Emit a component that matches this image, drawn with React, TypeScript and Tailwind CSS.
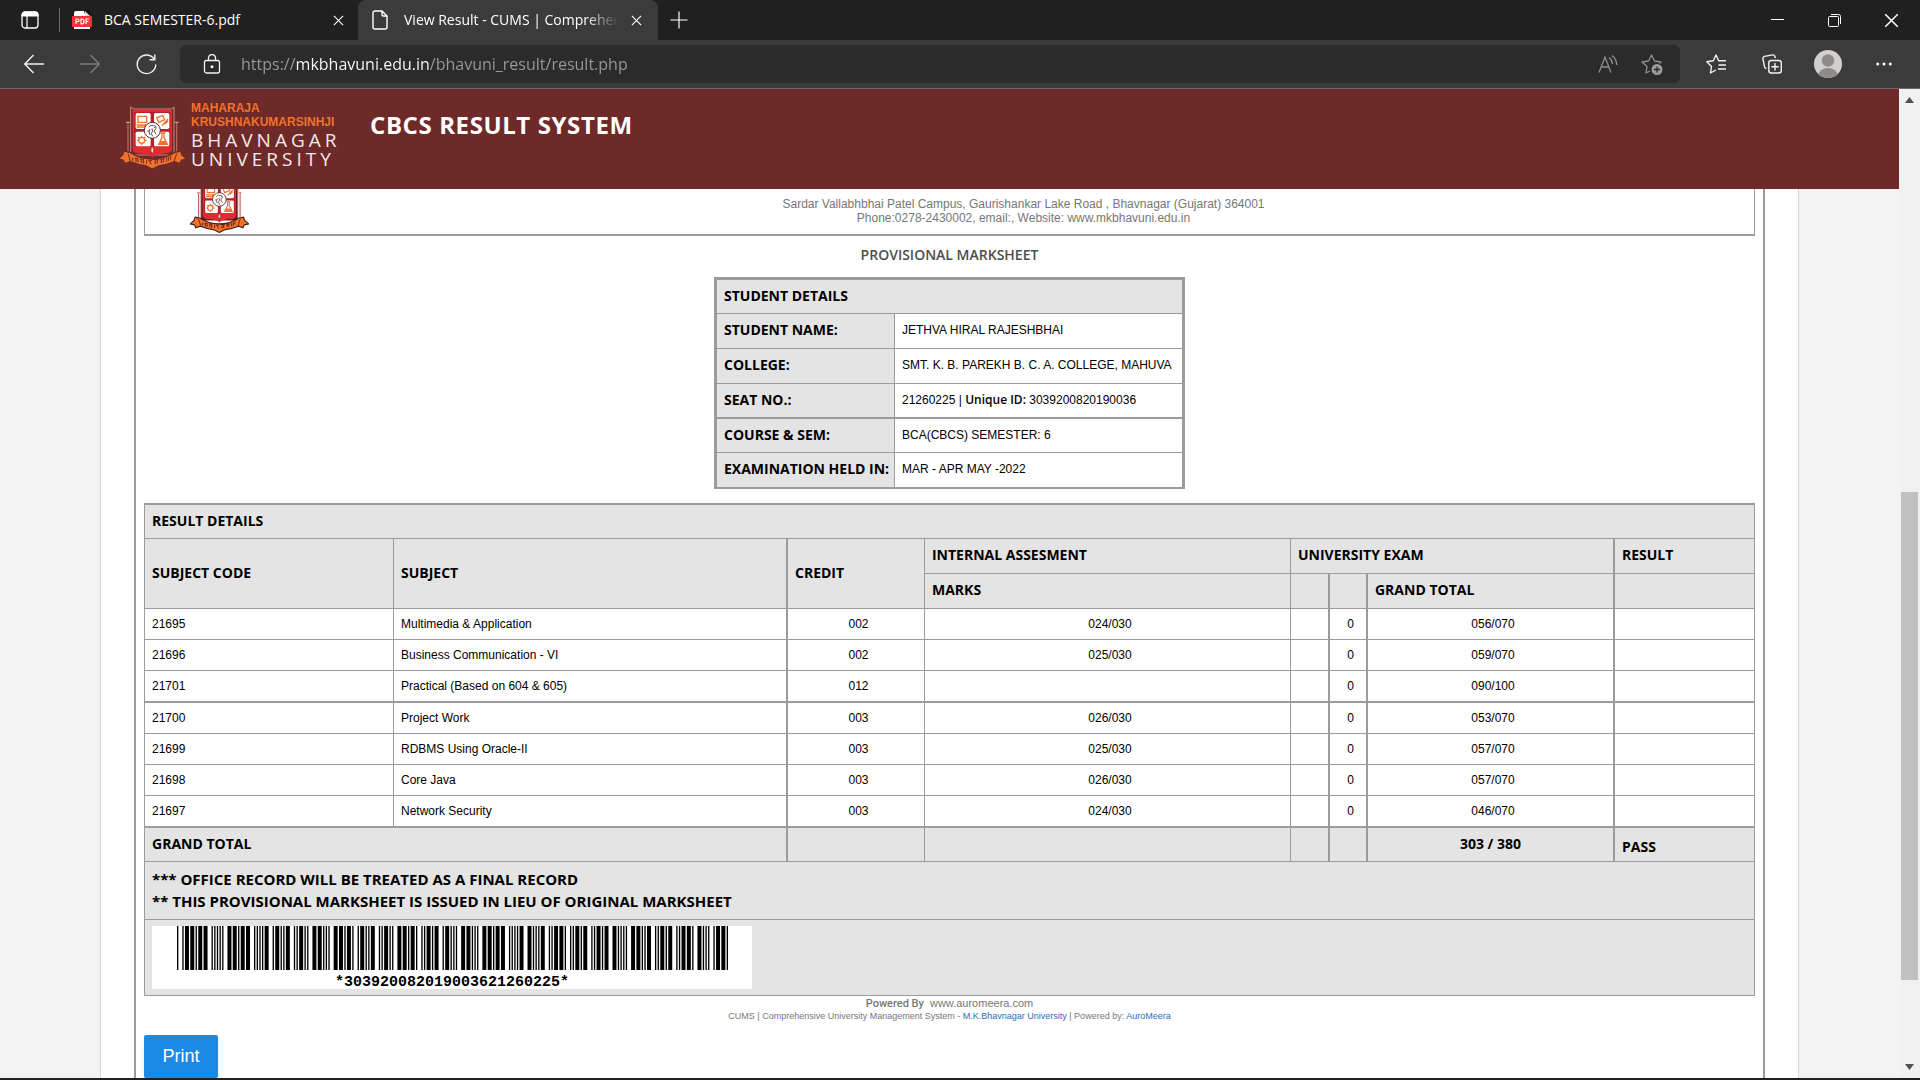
import type { ReactNode } from "react";

/* ---------- Code 39 barcode ---------- */

const CODE39: Record<string, string> = {
  "0": "nnnwwnwnn",
  "1": "wnnwnnnnw",
  "2": "nnwwnnnnw",
  "3": "wnwwnnnnn",
  "4": "nnnwwnnnw",
  "5": "wnnwwnnnn",
  "6": "nnwwwnnnn",
  "7": "nnnwnnwnw",
  "8": "wnnwnnwnn",
  "9": "nnwwnnwnn",
  "*": "nwnnwnwnn",
};

function Barcode({ value }: { value: string }) {
  const bars: { x: number; w: number }[] = [];
  let x = 0;
  for (const ch of value) {
    CODE39[ch].split("").forEach((k, i) => {
      const w = k === "w" ? 3 : 1;
      if (i % 2 === 0) bars.push({ x, w });
      x += w;
    });
    x += 1;
  }
  return (
    <div className="flex h-[63px] w-[600px] flex-col items-center bg-white">
      <svg className="h-11 w-[551px]" viewBox={`0 0 ${x - 1} 44`} preserveAspectRatio="none" aria-label="Barcode">
        {bars.map((b) => (
          <rect key={b.x} x={b.x} y="0" width={b.w} height="44" fill="#000" />
        ))}
      </svg>
      <span className="mt-1.5 font-['Liberation_Mono',monospace] text-[15px] leading-[13px] font-bold text-black">{value}</span>
    </div>
  );
}

/* ---------- University emblem ---------- */

function Emblem({ className, line }: { className: string; line: string }) {
  return (
    <svg className={className} viewBox="0 0 207 190" fill="none" aria-hidden="true">
      <path d="M30 48V136M176 48V136" stroke="#b5655a" strokeWidth="4" />
      <path d="M24 48H36M170 48H182" stroke="#d99a86" strokeWidth="4" />
      <path d="M38 2L46 8H160L168 2V146H38Z" fill={line} stroke="#c98d84" strokeWidth="3" />
      <path d="M44 11H162V128Q162 142 134 142Q108 144 103 154Q98 144 72 142Q44 142 44 128Z" fill="#e22a31" />
      <path d="M49 17H157V120H49Z" fill="#b3202a" />
      <rect x="53" y="20" width="45" height="48" rx="5" fill="#fff" />
      <rect x="108" y="20" width="46" height="48" rx="5" fill="#fff" />
      <rect x="53" y="76" width="45" height="44" rx="5" fill="#fff" />
      <rect x="108" y="76" width="46" height="44" rx="5" fill="#fff" />
      <g stroke="#f0722b" strokeWidth="4">
        <path d="M60 30H86V48H60ZM56 56H82L78 62H56" />
        <path d="M116 34L134 28L140 40L122 48ZM132 58L150 38M140 54L150 44" />
        <circle cx="71" cy="102" r="9" />
        <path d="M71 88V93M71 111V116M57 102H62M80 102H86M60 92L65 96M82 92L77 96" />
        <path d="M132 80V94L122 114H148L138 94V80M128 80H142" />
        <path d="M128 106H142L145 112H125Z" fill="#f0722b" />
      </g>
      <circle cx="103" cy="72" r="24" fill="#fff" stroke="#5f2527" strokeWidth="3" />
      <path d="M92 62Q98 54 106 58Q114 56 114 66L108 74L114 84M96 68Q90 76 96 86M102 66Q106 74 100 82L104 90M88 74H94M108 64L112 62" stroke="#6b4a4a" strokeWidth="3" />
      <path d="M103 120Q112 132 103 142Q94 132 103 120Z" fill="#fde7c0" stroke={line} strokeWidth="2" />
      <path
        d="M18 134L36 138Q66 158 103 158Q140 158 170 138L188 134L192 146L206 158L190 162L186 172L170 166Q146 176 124 178L103 188L82 178Q60 176 36 166L20 172L16 162L1 158L14 146Z"
        fill="#f0722b"
        stroke={line}
        strokeWidth="4"
      />
      <path d="M30 142L38 166M176 142L168 166" stroke={line} strokeWidth="3" />
      <path
        d="M44 154V164M50 156H60M54 156V168M60 156V168M66 158H78M70 158V170M76 158V172M86 162V172M92 162H102M94 162L100 174M108 160H122M112 160V174M118 160V172M126 158H140M130 158V170M136 158V168M146 154V166M152 152V164M158 150V160"
        stroke={line}
        strokeWidth="3"
      />
    </svg>
  );
}

/* ---------- Browser chrome ---------- */

function IconButton({ label, className, children }: { label: string; className: string; children: ReactNode }) {
  return (
    <button type="button" aria-label={label} className={`flex shrink-0 items-center justify-center ${className}`}>
      {children}
    </button>
  );
}

function CloseGlyph({ className }: { className: string }) {
  return (
    <svg className={className} viewBox="0 0 12 12" fill="none" stroke="currentColor" aria-hidden="true">
      <path d="M1 1L11 11M11 1L1 11" strokeWidth="1.2" />
    </svg>
  );
}

function TabStrip() {
  return (
    <div className="flex h-10 shrink-0 bg-[#202020] text-white">
      <IconButton label="Tab actions" className="w-[59px]">
        <svg className="h-[18px] w-[18px]" viewBox="0 0 18 18" fill="none" stroke="#fff" aria-hidden="true">
          <rect x="1" y="1" width="16" height="16" rx="3" strokeWidth="1.3" />
          <path d="M1 5V4A3 3 0 0 1 4 1H14A3 3 0 0 1 17 4V5Z" fill="#fff" />
          <path d="M6 5V17" strokeWidth="1.2" />
        </svg>
      </IconButton>
      <div className="my-2 w-px bg-[#6b6b6b]" />
      <div className="flex w-[298px] items-center pl-3">
        <svg className="h-5 w-5 shrink-0" viewBox="0 0 20 20" aria-hidden="true">
          <path d="M4 1H13L18 6V19H2V3Q2 1 4 1Z" fill="#fff" />
          <path d="M12 0H18V6Q12 6 12 0Z" fill="#111" />
          <path d="M13 1L18 6H13Z" fill="#ddd" />
          <rect x="0" y="6" width="20" height="11" rx="1" fill="#f0343c" />
          <path d="M4 14V9H5.6Q7 9 7 10.4Q7 11.6 5.6 11.6H4M9 14V9H10Q12 9 12 11.5Q12 14 10 14ZM14 14V9H17M14 11.5H16.4" fill="none" stroke="#fff" strokeWidth="1.1" />
        </svg>
        <span className="ml-3 flex-1 text-sm whitespace-nowrap">BCA SEMESTER-6.pdf</span>
        <IconButton label="Close tab" className="h-10 w-10">
          <CloseGlyph className="h-[11px] w-[11px]" />
        </IconButton>
      </div>
      <div className="flex w-[300px] items-center rounded-t-lg bg-[#3b3b3b] pl-[14px]">
        <svg className="h-5 w-4 shrink-0" viewBox="0 0 16 20" fill="none" stroke="#fff" strokeWidth="1.4" aria-hidden="true">
          <path d="M10 1H3A2 2 0 0 0 1 3V17A2 2 0 0 0 3 19H13A2 2 0 0 0 15 17V6ZM10 1V4.500A1.500 1.500 0 0 0 11.500 6H15" />
        </svg>
        <span className="ml-4 flex-1 overflow-hidden mask-r-from-85% text-sm whitespace-nowrap">
          View Result - CUMS | Comprehensive
        </span>
        <IconButton label="Close tab" className="h-10 w-9">
          <CloseGlyph className="h-[11px] w-[11px]" />
        </IconButton>
        <span className="w-1" />
      </div>
      <IconButton label="New tab" className="w-[42px]">
        <svg className="h-[18px] w-[18px]" viewBox="0 0 18 18" stroke="#fff" strokeWidth="1.2" aria-hidden="true">
          <path d="M9 0.500V17.500M0.500 9H17.500" />
        </svg>
      </IconButton>
      <div className="flex-1" />
      <IconButton label="Minimize" className="w-[57px]">
        <svg className="h-3 w-[13px]" viewBox="0 0 13 12" stroke="#fff" aria-hidden="true">
          <path d="M0 5.500H13" />
        </svg>
      </IconButton>
      <IconButton label="Restore" className="w-[57px]">
        <svg className="h-[13px] w-[13px]" viewBox="0 0 13 13" fill="none" stroke="#fff" aria-hidden="true">
          <rect x="0.500" y="2.500" width="10" height="10" rx="1" />
          <path d="M3 0.500H10.500A2 2 0 0 1 12.500 2.500V10" />
        </svg>
      </IconButton>
      <IconButton label="Close window" className="w-[57px]">
        <CloseGlyph className="h-[15px] w-[15px]" />
      </IconButton>
    </div>
  );
}

function Toolbar() {
  return (
    <div className="flex h-[49px] shrink-0 items-center border-b border-[#6a6a6a] bg-[#3b3b3b] pr-2 pl-1.5 text-white">
      <IconButton label="Back" className="h-10 w-14">
        <svg className="h-5 w-5" viewBox="0 0 20 20" fill="none" stroke="#f2f2f2" strokeWidth="1.4" aria-hidden="true">
          <path d="M20 10H1M9.500 1L0.800 10L9.500 19" />
        </svg>
      </IconButton>
      <IconButton label="Forward" className="h-10 w-14">
        <svg className="h-5 w-5" viewBox="0 0 20 20" fill="none" stroke="#7c7c7c" strokeWidth="1.4" aria-hidden="true">
          <path d="M0 10H19M10.500 1L19.200 10L10.500 19" />
        </svg>
      </IconButton>
      <IconButton label="Refresh" className="h-10 w-14">
        <svg className="h-[21px] w-[21px]" viewBox="0 0 21 21" fill="none" stroke="#f2f2f2" strokeWidth="1.4" aria-hidden="true">
          <path d="M18.500 5.500A9.300 9.300 0 1 0 19.800 10.500M18.800 0.500V5.700H13.500" />
        </svg>
      </IconButton>
      <div className="ml-1.5 flex h-[38px] flex-1 items-center rounded-md bg-[#2b2b2b] pr-1.5 pl-[23px]">
        <svg className="h-5 w-[18px] shrink-0" viewBox="0 0 18 20" fill="none" stroke="#f2f2f2" strokeWidth="1.300" aria-hidden="true">
          <rect x="1.500" y="6.500" width="15" height="12.500" rx="2" />
          <path d="M5.500 6.500V4A3.500 3.500 0 0 1 12.500 4V6.500" />
          <circle cx="9" cy="12.800" r="0.900" fill="#f2f2f2" />
        </svg>
        <input
          type="text"
          aria-label="Address"
          defaultValue="https://mkbhavuni.edu.in/bhavuni_result/result.php"
          className="ml-5 h-[30px] flex-1 bg-[linear-gradient(90deg,#9a9a9a_55px,#fff_55px,#fff_189px,#9a9a9a_189px)] bg-clip-text text-base text-transparent outline-none"
        />
        <IconButton label="Read aloud" className="h-8 w-11">
          <svg className="h-[18px] w-5" viewBox="0 0 20 18" fill="none" stroke="#8e8e8e" strokeWidth="1.300" aria-hidden="true">
            <path d="M1 17.500L7 2L13 17.500M3 12H11M11 2.500Q14 4.500 14.500 9M14 0.500Q18.500 4 18.800 10" />
          </svg>
        </IconButton>
        <IconButton label="Add to favorites" className="h-8 w-11">
          <svg className="h-[21px] w-[22px]" viewBox="0 0 22 21" fill="none" stroke="#8e8e8e" strokeWidth="1.300" aria-hidden="true">
            <path d="M9 17L5 19L6 12.500L1 8L7.500 7L10.500 1L13.500 7L20 8L18.500 9.500" strokeLinejoin="round" />
            <circle cx="16" cy="15.500" r="5.500" fill="#9a9a9a" stroke="none" />
            <path d="M16 12.500V18.500M13 15.500H19" stroke="#2b2b2b" />
          </svg>
        </IconButton>
      </div>
      <IconButton label="Favorites" className="ml-2 h-10 w-14">
        <svg className="h-5 w-5" viewBox="0 0 20 20" fill="none" stroke="#f2f2f2" strokeWidth="1.400" aria-hidden="true">
          <path d="M10 16L4.500 19L5.500 12.500L0.800 7.800L7.300 6.800L10 1L12.700 6.800H20M12.500 11H20M12 15H20" strokeLinejoin="round" />
        </svg>
      </IconButton>
      <IconButton label="Collections" className="h-10 w-14">
        <svg className="h-5 w-5" viewBox="0 0 20 20" fill="none" stroke="#f2f2f2" strokeWidth="1.400" aria-hidden="true">
          <rect x="6.800" y="6.500" width="12.500" height="12.500" rx="2.500" />
          <path d="M13 9V16.500M9.300 12.800H16.800M4.500 14.500Q3 14.500 2.600 13L0.900 5Q0.600 3 2.500 2.400L10.500 0.900Q12.500 0.800 13 2.500L13.300 4.200" />
        </svg>
      </IconButton>
      <IconButton label="Profile" className="h-10 w-14">
        <svg className="h-7 w-7" viewBox="0 0 28 28" aria-hidden="true">
          <clipPath id="avatar">
            <circle cx="14" cy="14" r="14" />
          </clipPath>
          <g clipPath="url(#avatar)">
            <rect width="28" height="28" fill="#d2d0ce" />
            <circle cx="14" cy="10.500" r="6.200" fill="#8f8b88" />
            <ellipse cx="14" cy="26" rx="10" ry="8" fill="#8f8b88" />
          </g>
        </svg>
      </IconButton>
      <IconButton label="Settings and more" className="h-10 w-14">
        <svg className="h-1 w-4" viewBox="0 0 16 4" fill="#fff" aria-hidden="true">
          <circle cx="1.700" cy="2" r="1.500" />
          <circle cx="8" cy="2" r="1.500" />
          <circle cx="14.300" cy="2" r="1.500" />
        </svg>
      </IconButton>
    </div>
  );
}

function Scrollbar() {
  return (
    <div className="flex w-[21px] shrink-0 flex-col items-center justify-between bg-[#f1f1f1] pt-2 pb-2">
      <svg className="h-[6px] w-[9px]" viewBox="0 0 9 6" fill="#505050" aria-hidden="true">
        <path d="M0 6L4.500 0L9 6Z" />
      </svg>
      <div className="flex w-full flex-1 flex-col px-0.5">
        <div className="grow-[389]" />
        <div className="grow-[488] bg-[#c1c1c1]" />
        <div className="grow-[84]" />
      </div>
      <svg className="h-[6px] w-[9px]" viewBox="0 0 9 6" fill="#505050" aria-hidden="true">
        <path d="M0 0L4.500 6L9 0Z" />
      </svg>
    </div>
  );
}

/* ---------- Page ---------- */

function SiteHeader() {
  return (
    <header className="flex h-[100px] shrink-0 bg-[#6e2929] pl-[118px]">
      <div className="mt-3 flex h-[72px] w-[252px]">
        <Emblem className="mt-[5px] h-[64px] w-[69px] shrink-0" line="#6e2929" />
        <div className="ml-1 flex flex-col">
          <span className="font-['Liberation_Sans',sans-serif] text-xs leading-[14px] font-bold text-[#f0722b]">MAHARAJA</span>
          <span className="font-['Liberation_Sans',sans-serif] text-xs leading-[14px] font-bold text-[#f0722b]">KRUSHNAKUMARSINHJI</span>
          <span className="pt-0.5 text-[19px] leading-[19px] font-medium tracking-[4px] text-[#f3e9e9]">BHAVNAGAR</span>
          <span className="text-[19px] leading-[19px] font-medium tracking-[4px] text-[#f3e9e9]">UNIVERSITY</span>
        </div>
      </div>
      <h1 className="mt-[18px] text-2xl leading-9 font-bold tracking-wide text-white">CBCS RESULT SYSTEM</h1>
    </header>
  );
}

const LABEL = "border-t border-[#9b9b9b] bg-[#e4e4e4] px-[7px] pb-0.5 text-left text-sm font-bold whitespace-nowrap";
const VALUE = "border-t border-l border-[#9b9b9b] bg-white px-[7px] pb-0.5 text-xs whitespace-nowrap";

function StudentTable() {
  return (
    <table className="mx-auto w-[471px] table-fixed border-separate border-spacing-0 border-3 border-b-2 border-[#9b9b9b] text-black">
      <colgroup>
        <col className="w-[177px]" />
        <col />
      </colgroup>
      <tbody>
        <tr className="h-[33px]">
          <th colSpan={2} scope="colgroup" className="bg-[#e4e4e4] px-[7px] pb-0.5 text-left text-sm font-bold">
            STUDENT DETAILS
          </th>
        </tr>
        <tr className="h-[35px]">
          <th scope="row" className={LABEL}>STUDENT NAME:</th>
          <td className={VALUE}>JETHVA HIRAL RAJESHBHAI</td>
        </tr>
        <tr className="h-[35px]">
          <th scope="row" className={LABEL}>COLLEGE:</th>
          <td className={VALUE}>SMT. K. B. PAREKH B. C. A. COLLEGE, MAHUVA</td>
        </tr>
        <tr className="h-[34px]">
          <th scope="row" className={LABEL}>SEAT NO.:</th>
          <td className={VALUE}>
            21260225 | <b className="font-['Open_Sans',sans-serif] font-semibold">Unique ID:</b> 3039200820190036
          </td>
        </tr>
        <tr className="h-[35px]">
          <th scope="row" className={`${LABEL} border-t-2`}>COURSE &amp; SEM:</th>
          <td className={`${VALUE} border-t-2`}>BCA(CBCS) SEMESTER: 6</td>
        </tr>
        <tr className="h-[35px]">
          <th scope="row" className={LABEL}>EXAMINATION HELD IN:</th>
          <td className={VALUE}>MAR - APR MAY -2022</td>
        </tr>
      </tbody>
    </table>
  );
}

type Subject = { code: string; name: string; credit: string; marks: string; total: string };

const SUBJECTS: Subject[] = [
  { code: "21695", name: "Multimedia & Application", credit: "002", marks: "024/030", total: "056/070" },
  { code: "21696", name: "Business Communication - VI", credit: "002", marks: "025/030", total: "059/070" },
  { code: "21701", name: "Practical (Based on 604 & 605)", credit: "012", marks: "", total: "090/100" },
  { code: "21700", name: "Project Work", credit: "003", marks: "026/030", total: "053/070" },
  { code: "21699", name: "RDBMS Using Oracle-II", credit: "003", marks: "025/030", total: "057/070" },
  { code: "21698", name: "Core Java", credit: "003", marks: "026/030", total: "057/070" },
  { code: "21697", name: "Network Security", credit: "003", marks: "024/030", total: "046/070" },
];

const HEAD = "border-t border-l border-[#9b9b9b] bg-[#e4e4e4] px-[7px] text-left text-sm font-bold";

function ResultTable() {
  return (
    <table className="mt-[14px] w-full table-fixed border-separate border-spacing-0 border-r border-b border-[#9b9b9b] text-black">
      <colgroup>
        <col className="w-[249px]" />
        <col />
        <col className="w-[138px]" />
        <col className="w-[366px]" />
        <col className="w-[38px]" />
        <col className="w-[38px]" />
        <col className="w-[247px]" />
        <col className="w-[141px]" />
      </colgroup>
      <tbody>
        <tr className="h-[35px]">
          <th colSpan={8} className={`${HEAD} border-t-2 pb-0.5`}>RESULT DETAILS</th>
        </tr>
        <tr className="h-[35px]">
          <th rowSpan={2} scope="col" className={`${HEAD} pb-0.5`}>SUBJECT CODE</th>
          <th rowSpan={2} scope="col" className={`${HEAD} pb-0.5`}>SUBJECT</th>
          <th rowSpan={2} scope="col" className={`${HEAD} border-l-2 pb-0.5`}>CREDIT</th>
          <th scope="col" className={`${HEAD} pb-0.5`}>INTERNAL ASSESMENT</th>
          <th colSpan={3} scope="colgroup" className={`${HEAD} pb-0.5`}>UNIVERSITY EXAM</th>
          <th scope="col" className={`${HEAD} border-l-2 pb-0.5`}>RESULT</th>
        </tr>
        <tr className="h-[35px]">
          <th scope="col" className={`${HEAD} pb-0.5`}>MARKS</th>
          <td className={HEAD} />
          <td className={`${HEAD} border-l-2`} />
          <th scope="col" className={`${HEAD} border-l-2 pb-0.5`}>GRAND TOTAL</th>
          <td className={`${HEAD} border-l-2`} />
        </tr>
        {SUBJECTS.map((s, i) => (
          <tr
            key={s.code}
            className={
              i === 3
                ? "h-8 text-xs *:border-t-2 *:border-l *:border-[#9b9b9b] *:bg-white *:px-[7px]"
                : "h-[31px] text-xs *:border-t *:border-l *:border-[#9b9b9b] *:bg-white *:px-[7px]"
            }
          >
            <td>{s.code}</td>
            <td>{s.name}</td>
            <td className="border-l-2! pl-3! text-center">{s.credit}</td>
            <td className="pl-3! text-center">{s.marks}</td>
            <td />
            <td className="border-l-2! pl-3! text-center">0</td>
            <td className="border-l-2! pl-3! text-center">{s.total}</td>
            <td className="border-l-2!" />
          </tr>
        ))}
        <tr className="h-[35px]">
          <th colSpan={2} scope="row" className={`${HEAD} border-t-2 pb-0.5`}>GRAND TOTAL</th>
          <td className={`${HEAD} border-t-2 border-l-2`} />
          <td className={`${HEAD} border-t-2`} />
          <td className={`${HEAD} border-t-2`} />
          <td className={`${HEAD} border-t-2 border-l-2`} />
          <td className="border-t-2 border-l-2 border-[#9b9b9b] bg-[#e4e4e4] pb-0.5 text-center text-sm font-bold">303 / 380</td>
          <td className={`${HEAD} border-t-2 border-l-2 pt-1`}>PASS</td>
        </tr>
        <tr className="h-[58px]">
          <td colSpan={8} className="border-t border-l border-[#9b9b9b] bg-[#e4e4e4] px-[7px] pb-0.5 text-[15px] leading-[22px] font-bold">
            <p>*** OFFICE RECORD WILL BE TREATED AS A FINAL RECORD</p>
            <p>** THIS PROVISIONAL MARKSHEET IS ISSUED IN LIEU OF ORIGINAL MARKSHEET</p>
          </td>
        </tr>
        <tr className="h-[76px]">
          <td colSpan={8} className="border-t border-l border-[#9b9b9b] bg-[#e4e4e4] px-[7px]">
            <Barcode value="*303920082019003621260225*" />
          </td>
        </tr>
      </tbody>
    </table>
  );
}

export default function App() {
  return (
    <div className="flex h-screen flex-col overflow-hidden border-b-2 border-[#202020] bg-[#f3f3f3] font-['Open_Sans',sans-serif]">
      <TabStrip />
      <Toolbar />
      <div className="flex min-h-0 flex-1">
        <main className="flex min-w-0 flex-1 flex-col overflow-hidden">
          <SiteHeader />
          <div className="mx-[100px] flex min-h-0 flex-1 flex-col border-x border-[#d6d6d6] bg-white px-[33px] font-['Liberation_Sans',sans-serif]">
            <div className="min-h-0 flex-1 border-x-2 border-[#9b9b9b] px-2">
              <div className="flex h-[47px] items-end overflow-hidden border-x border-b-2 border-[#9b9b9b]">
                <div className="flex w-[148px] justify-center pb-px">
                  <Emblem className="h-[54px] w-[59px]" line="#4a1a1c" />
                </div>
                <p className="flex-1 self-start pt-2 text-center text-xs leading-[14px] text-[#777]">
                  Sardar Vallabhbhai Patel Campus, Gaurishankar Lake Road , Bhavnagar (Gujarat) 364001
                  <br />
                  Phone:0278-2430002, email:, Website: www.mkbhavuni.edu.in
                </p>
              </div>
              <div className="font-['Open_Sans',sans-serif]">
                <h2 className="h-[41px] text-center text-sm leading-[38px] font-semibold text-[#4d4d4d]">PROVISIONAL MARKSHEET</h2>
              </div>
              <div className="[&_td]:font-['Liberation_Sans',sans-serif] [&_th]:font-['Open_Sans',sans-serif] [&_td.font-bold]:font-['Open_Sans',sans-serif]">
                <StudentTable />
                <ResultTable />
              </div>
              <footer className="pt-px text-center text-[#777]">
                <p className="text-[11px] leading-[13px]">
                  <span className="font-['Roboto',sans-serif] font-medium">Powered By</span>
                  <span className="ml-1.5">www.auromeera.com</span>
                </p>
                <p className="text-[9px] leading-3">
                  CUMS | Comprehensive University Management System -{" "}
                  <a href="#university" className="text-[#2a6fb5]">M.K.Bhavnagar University</a> | Powered by:{" "}
                  <a href="#auromeera" className="text-[#2a6fb5]">AuroMeera</a>
                </p>
              </footer>
              <button type="button" className="mt-[13px] h-[43px] w-[74px] rounded-xs bg-[#1a8ae5] pb-0.5 text-lg text-white shadow-md">
                Print
              </button>
            </div>
          </div>
        </main>
        <Scrollbar />
      </div>
    </div>
  );
}
